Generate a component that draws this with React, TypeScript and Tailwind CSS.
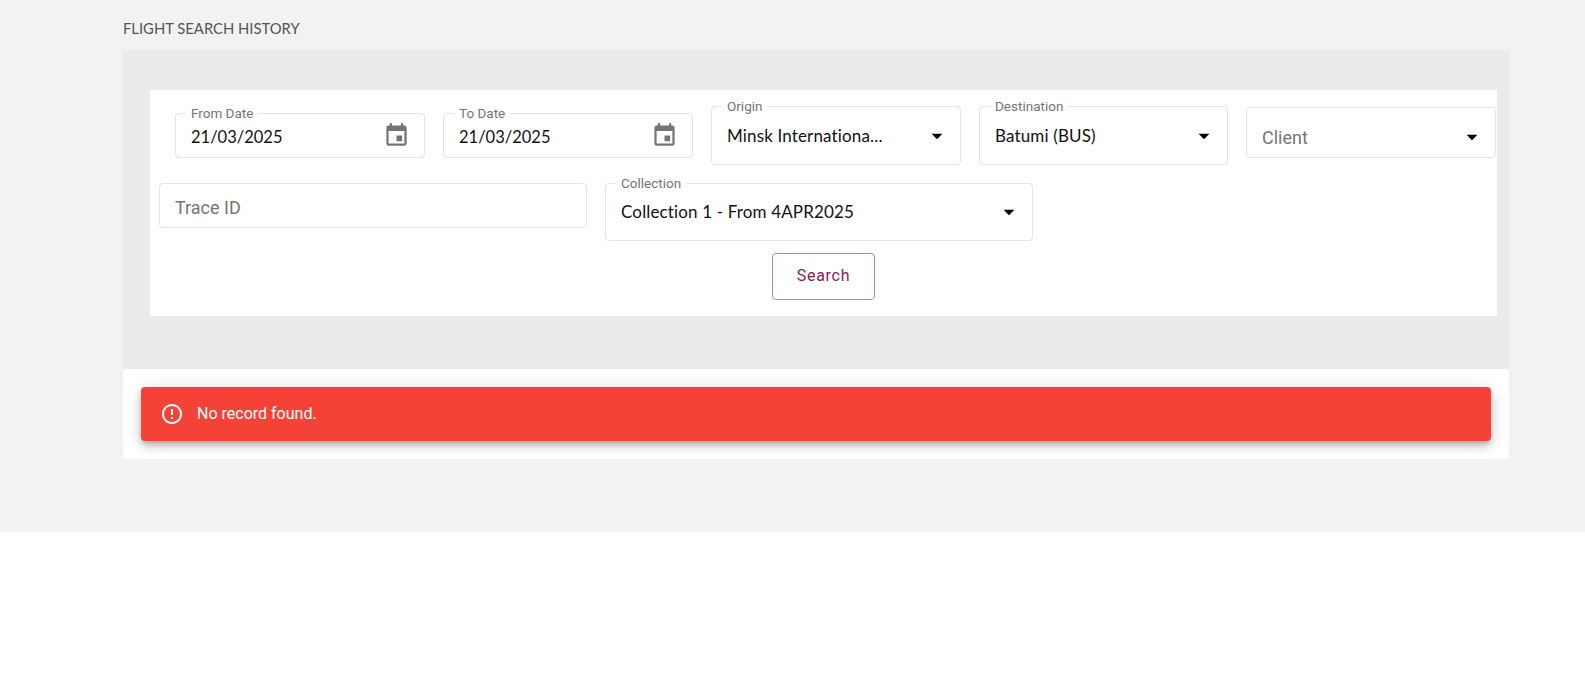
const valueFont = "font-['Lato',sans-serif]";

function CalendarIcon() {
  return (
    <svg viewBox="0 0 24 24" className="h-[27px] w-[27px] fill-[#757575]">
      <path d="M17 12h-5v5h5v-5zM16 1v2H8V1H6v2H5c-1.11 0-1.99.9-1.99 2L3 19c0 1.1.89 2 2 2h14c1.1 0 2-.9 2-2V5c0-1.1-.9-2-2-2h-1V1h-2zm3 18H5V8h14v11z" />
    </svg>
  );
}

function ArrowIcon({ className = "" }: { className?: string }) {
  return (
    <svg viewBox="0 0 24 24" className={`h-[26px] w-[26px] fill-black ${className}`}>
      <path d="M7 10l5 5 5-5z" />
    </svg>
  );
}

function Label({ text }: { text: string }) {
  return (
    <span className="absolute -top-[8px] left-[10px] bg-white px-[5px] font-['Roboto',sans-serif] text-[13.5px] leading-[15px] text-[#757575]">
      {text}
    </span>
  );
}

function DateField({ label, value, className }: { label: string; value: string; className: string }) {
  return (
    <div className={`relative flex h-[45px] items-center justify-between rounded border border-[#e4e4e4] pl-[15px] pr-[14px] ${className}`}>
      <Label text={label} />
      <span className={`${valueFont} pt-[3px] text-[16.5px] text-[#111]`}>{value}</span>
      <CalendarIcon />
    </div>
  );
}

function SelectField({ label, value, className }: { label: string; value: string; className: string }) {
  return (
    <div className={`relative flex items-center justify-between rounded border border-[#e4e4e4] pl-[15px] pr-[10px] ${className}`}>
      <Label text={label} />
      <span className={`${valueFont} text-[17px] tracking-[0.15px] text-[#111]`}>{value}</span>
      <ArrowIcon />
    </div>
  );
}

export default function App() {
  return (
    <div className="min-h-[692px] bg-white">
      <div className="h-[532px] bg-[#f2f2f2] pl-[123px] pr-[76px] pt-[19px]">
        <h1 className={`${valueFont} mb-[13px] text-[14.8px] leading-[18px] text-[#555]`}>FLIGHT SEARCH HISTORY</h1>

        <div className="h-[319px] bg-[#ebebeb] pl-[27px] pr-[12px] pt-[40px]">
          <div className="h-[226px] bg-white pt-[16px]">
            <div className="flex items-start">
              <DateField label="From Date" value="21/03/2025" className="ml-[25px] mt-[7px] w-[250px]" />
              <DateField label="To Date" value="21/03/2025" className="ml-[18px] mt-[7px] w-[250px]" />
              <SelectField label="Origin" value="Minsk Internationa..." className="ml-[18px] h-[59px] w-[250px]" />
              <SelectField label="Destination" value="Batumi (BUS)" className="ml-[18px] h-[59px] w-[249px]" />
              <div className="ml-[18px] mt-[1px] flex h-[51px] w-[250px] items-center justify-between rounded border border-[#e4e4e4] pl-[15px] pr-[10px]">
                <span className="pt-[9px] font-['Roboto',sans-serif] text-[18px] text-[#757575]">Client</span>
                <ArrowIcon className="mt-[9px]" />
              </div>
            </div>

            <div className="mt-[18px] flex items-start">
              <div className="ml-[9px] flex h-[45px] w-[428px] items-center rounded border border-[#e4e4e4] pl-[15px]">
                <span className="pt-[3px] font-['Roboto',sans-serif] text-[18px] text-[#757575]">Trace ID</span>
              </div>
              <SelectField label="Collection" value="Collection 1 - From 4APR2025" className="ml-[18px] h-[58px] w-[428px]" />
            </div>

            <div className="mt-[12px] flex justify-center">
              <button className="h-[47px] w-[103px] rounded border border-[#bd7fa3] pb-[2px] font-['Roboto',sans-serif] text-[16px] tracking-[0.7px] text-[#8e1a5b]">
                Search
              </button>
            </div>
          </div>
        </div>

        <div className="h-[90px] rounded bg-white px-[18px] pt-[18px]">
          <div className="flex h-[54px] items-center gap-[13px] rounded bg-[#f44336] pl-[19px] shadow-[0_3px_5px_-1px_rgba(0,0,0,0.2),0_6px_10px_0_rgba(0,0,0,0.14),0_1px_18px_0_rgba(0,0,0,0.12)]">
            <svg viewBox="0 0 24 24" className="h-6 w-6 fill-white">
              <path d="M11 15h2v2h-2zm0-8h2v6h-2zm.99-5C6.47 2 2 6.48 2 12s4.47 10 9.99 10C17.52 22 22 17.52 22 12S17.52 2 11.99 2zM12 20c-4.42 0-8-3.58-8-8s3.58-8 8-8 8 3.58 8 8-3.58 8-8 8z" />
            </svg>
            <span className="font-['Roboto',sans-serif] text-[16px] text-white">No record found.</span>
          </div>
        </div>
      </div>
    </div>
  );
}
